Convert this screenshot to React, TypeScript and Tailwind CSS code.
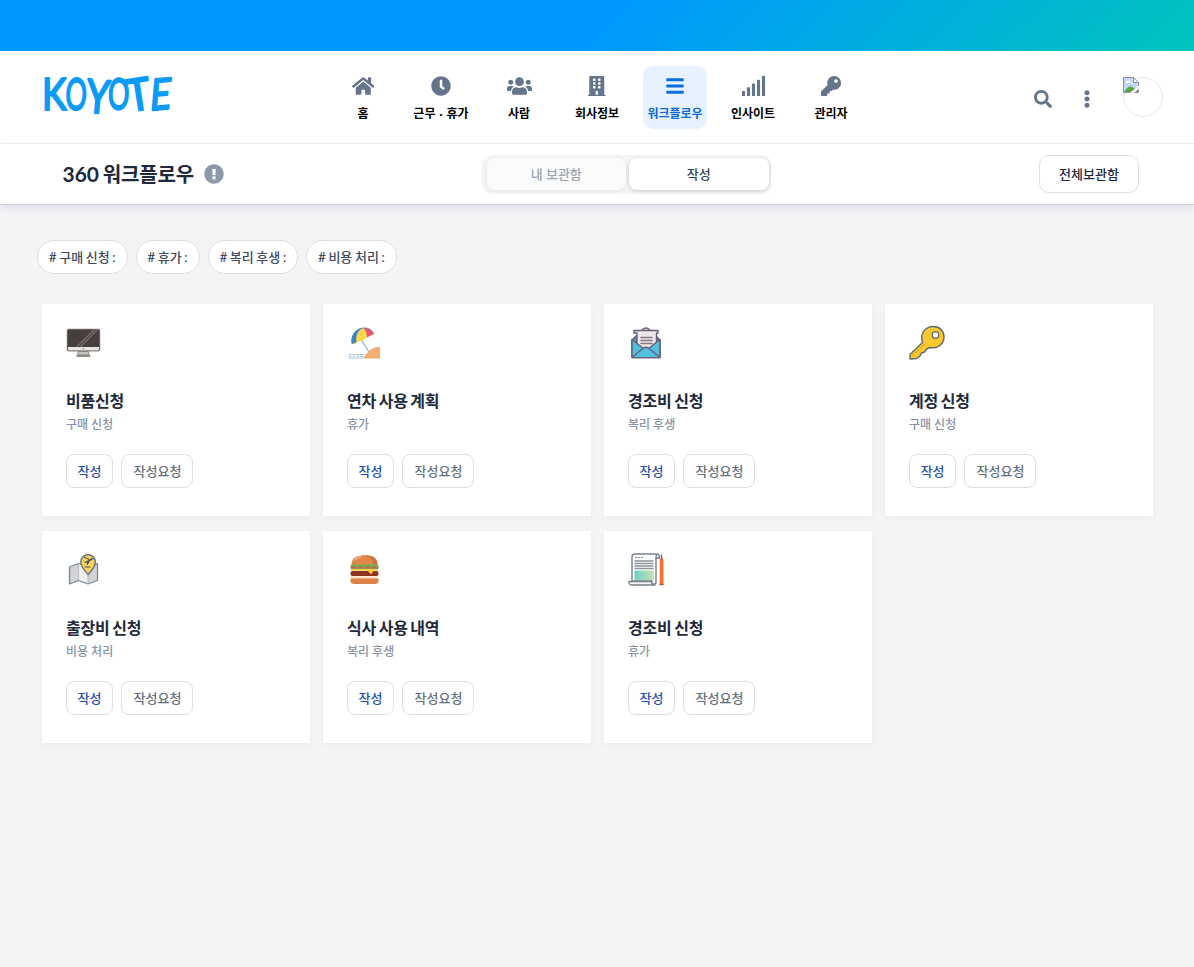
import type { ComponentType, ReactNode } from 'react';
import {
  FaHome, FaClock, FaUsers, FaBuilding, FaBars, FaSignal, FaKey, FaSearch, FaEllipsisV, FaExclamationCircle,
} from 'react-icons/fa';

const nav: { label: string; Icon: ComponentType<{ className?: string }>; size: string; active?: boolean }[] = [
  { label: '홈', Icon: FaHome, size: 'w-[22.5px]' },
  { label: '근무 · 휴가', Icon: FaClock, size: 'w-5' },
  { label: '사람', Icon: FaUsers, size: 'w-[25px]' },
  { label: '회사정보', Icon: FaBuilding, size: 'w-[17.5px]' },
  { label: '워크플로우', Icon: FaBars, size: 'w-5', active: true },
  { label: '인사이트', Icon: FaSignal, size: 'w-[25px]' },
  { label: '관리자', Icon: FaKey, size: 'w-5' },
];

function Art({ children }: { children: ReactNode }) {
  return <svg className="block size-9" viewBox="0 0 36 36" fill="none" strokeLinejoin="round" strokeLinecap="round">{children}</svg>;
}

const Monitor = () => (
  <Art>
    <path d="M13 26h9l1 4H12z" fill="#c9c1bd" stroke="#77706c" strokeWidth=".8" />
    <path d="M11 31h13" stroke="#77706c" strokeWidth="1.3" />
    <rect x="1.3" y="4.3" width="32.4" height="21.6" rx="1.5" fill="#463f3b" stroke="#65605c" />
    <path d="M2 22h31v2.6q0 1-1 1H3q-1 0-1-1z" fill="#e8e5e3" />
    <path d="m11 21.5 17-16.500M14.500 21.500 31 5" stroke="#77716e" strokeWidth="1.2" />
    <circle cx="17.500" cy="23.800" r=".8" fill="#8e8884" />
  </Art>
);

const Beach = () => (
  <Art>
    <path d="M13 13 22 27" stroke="#8fb5ca" strokeWidth="1.300" />
    <path d="M5 19C5 11 9 4 16 3c3 2 4 5 4.500 8.500l-4.500 4-5 1-2.500 2.500z" fill="#fcd64c" />
    <path d="M5 19C2.500 11 9 3 16 3 10 6 8.500 11 9.500 17z" fill="#3482c8" />
    <path d="M16 3c5-1 9 2 11 6l-7 3.500C20 8 18.500 5 16 3z" fill="#e95876" />
    <path d="M5 19c-2-8 4-15.500 11-16s9.500 3 11 6" stroke="#648daf" strokeWidth=".7" />
    <path d="M16 33.500c3-5 7-9.500 12-11 2-.6 3-.5 5-.5v11.500z" fill="#f3ad70" />
    <path d="M2 29.500h15M2 33h14" stroke="#a9cada" strokeWidth="1" />
    <path d="M2 31.300h15" stroke="#a9cada" strokeWidth="1.200" strokeDasharray="1.500 2.500" />
  </Art>
);

const Letter = () => (
  <Art>
    <path d="M4 15 8 11h20l4 4v17.500H4z" fill="#4799b9" stroke="#675f79" strokeWidth="1.400" />
    <path d="M14.500 4.500q3.500-3 7 0" fill="#efb574" stroke="#675f79" strokeWidth="1.500" />
    <path d="M8 5.500h22v2.500h-1.500V23L18 29l-9-7V8H6V5.500z" fill="#eee6e4" stroke="#675f79" strokeWidth="1.400" />
    <path d="M13 12.500h11M13 15.500h11M13 18.500h11" stroke="#817888" strokeWidth="1.500" />
    <path d="M4 14.500v18h28v-18L18 25.500z" fill="#52bfe0" stroke="#675f79" strokeWidth="1.500" />
    <path d="m4.500 32 11-9q2.500-1.500 5 0l11 9" fill="#52bfe0" stroke="#675f79" strokeWidth="1.400" />
  </Art>
);

const KeyArt = () => (
  <Art>
    <path d="M1 34v-4.500l12.500-12C10.500 8 17 1.500 24.500 1.500c6 0 10.500 4.500 10.500 10.500 0 7-6.500 12-14 10.500l-3.500 1.500-2 3-3 1-1.500 3-3.500 2.500z" fill="#fdc931" stroke="#606a6d" strokeWidth="1.400" />
    <path d="m3 31 13-12" stroke="#edb220" strokeWidth="1.500" />
    <circle cx="26.500" cy="10" r="3.300" fill="#fff" stroke="#606a6d" strokeWidth="1.300" />
  </Art>
);

const MapArt = () => (
  <Art>
    <path d="m3.500 15 9-3.500v17l-9 3.500z" fill="#d3d3d5" />
    <path d="m12.500 11.500 9.500 3.500v17l-9.500-3.500z" fill="#ededee" />
    <path d="m22 15 9.500-3.500v17L22 32z" fill="#d3d3d5" />
    <path d="m3.500 15 9-3.500L22 15l9.500-3.500v17L22 32l-9.500-3.500-9 3.500z" stroke="#788795" strokeWidth="1.300" />
    <path d="M12.500 12v16M22 16v15" stroke="#b3bac0" />
    <path d="M22 22.500c-3-3.500-7.200-7.500-7.200-12.500a7.300 7.300 0 0 1 14.600 0c0 5-4 9-7.400 12.500z" fill="#fcd15b" stroke="#667684" strokeWidth="1.400" />
    <path d="m17 8 2 2 7-4q2-.5 2 .5L24 9l-2.500 4-1-.5.5-2-2 .5z" fill="#465765" />
    <path d="m18.500 5.500 5 2M19 15h5" stroke="#465765" />
  </Art>
);

const Burger = () => (
  <Art>
    <path d="M4.500 13C4 5 12 3.300 17.500 3.300S31 5 30.500 13z" fill="#df884b" />
    <path d="M8 8q2-3 6-3" stroke="#f0ad75" strokeWidth="1.600" />
    <path d="M18 3.300c8 0 12.500 3 12.500 9.700h-4q0-6-8.500-9.700z" fill="#cf7439" />
    <path d="M4 17q-2.500-5 3-4.500h21q5-.5 3.500 4.500z" fill="#70ad50" />
    <path d="M5 15.500h25" stroke="#dd5745" strokeWidth="1.800" strokeDasharray="3 4" />
    <rect x="3.500" y="19" width="28" height="5" rx="2" fill="#91321f" />
    <path d="M4 17h27v1.500h-4L24 22.500 20.500 18.500H4z" fill="#ffc93d" />
    <path d="M4 24.500h27V27H4z" fill="#f3dfb8" />
    <path d="M3.500 26.500h28V29q0 3-4 3h-20q-4 0-4-3z" fill="#dc8246" />
  </Art>
);

const Paper = () => (
  <Art>
    <defs>
      <linearGradient id="paperFill" x1="7" y1="23" x2="26" y2="23" gradientUnits="userSpaceOnUse">
        <stop stopColor="#72cfca" /><stop offset="1" stopColor="#c4e3b2" />
      </linearGradient>
    </defs>
    <path d="M28 2H7Q4 2 4 5v24h20v3q2.500 1 4-1V5q.500-3 2-3 1.500 1 1.500 4H28" fill="#fff" stroke="#78818a" strokeWidth="1.400" />
    <path d="M.800 29.500h22.700q0 4 3.500 3.500H4q-3.200 0-3.200-3.500z" fill="#f4f5f6" stroke="#78818a" strokeWidth="1.300" />
    <path d="M7.500 5.500h1M10.500 5.500h1M13.500 5.500h1" stroke="#78818a" strokeWidth="1.200" />
    <path d="M7 9h18M7 11.500h18M7 14h18M7 16.500h18" stroke="#8a929a" strokeWidth="1.400" />
    <path d="M6.500 18.500H26V28H6.500z" fill="url(#paperFill)" />
    <path d="m31.700 8 1.500-3h.8l1.500 3v25h-3.800z" fill="#fa7138" />
    <path d="M33.500 3V8" stroke="#737a80" strokeWidth="1.500" />
    <path d="M32 32.500h3" stroke="#c75432" strokeWidth="1.500" />
  </Art>
);

const cards: { title: string; group: string; Icon: ComponentType }[] = [
  { title: '비품신청', group: '구매 신청', Icon: Monitor },
  { title: '연차 사용 계획', group: '휴가', Icon: Beach },
  { title: '경조비 신청', group: '복리 후생', Icon: Letter },
  { title: '계정 신청', group: '구매 신청', Icon: KeyArt },
  { title: '출장비 신청', group: '비용 처리', Icon: MapArt },
  { title: '식사 사용 내역', group: '복리 후생', Icon: Burger },
  { title: '경조비 신청', group: '휴가', Icon: Paper },
];

const logoLetters = [
  { ch: 'K', t: 'translate(-1 36) scale(.86 1.05)' },
  { ch: 'O', t: 'translate(22 35.500) rotate(2) scale(.62 1.020)' },
  { ch: 'Y', t: 'translate(42 38) rotate(5) scale(.86 1.080)' },
  { ch: 'O', t: 'translate(64.500 35) rotate(2) scale(.62 1)' },
  { ch: 'T', t: 'translate(86 38) rotate(-9) scale(.95 1.040)' },
  { ch: 'E', t: 'translate(106 36.500) rotate(-5) skewX(-10) scale(.85 1)' },
];

function Logo() {
  return (
    <svg className="h-[82px] w-[150px]" viewBox="-10 -20 150 82" aria-label="KOYOTE">
      {logoLetters.map((l, i) => (
        <text key={i} transform={l.t} fontFamily="Lato, sans-serif" fontSize="43" fill="#0a9bf5" stroke="#0a9bf5" strokeWidth="2" strokeLinejoin="round">{l.ch}</text>
      ))}
    </svg>
  );
}

export default function App() {
  return (
    <div className="flex min-h-[967px] flex-col bg-[#f3f4f6] font-['Lato','Noto_Sans_CJK_KR',sans-serif] text-[#1e293b]">
      <div className="h-[51px] bg-[linear-gradient(135deg,#0099ff_50%,#00c4bd_100%)]" />
      <header className="grid h-[93px] grid-cols-[331px_1fr_auto] border-b border-[#f1f2f4] bg-white pr-[31px]">
        <div className="pt-[3px] pl-[33px]"><Logo /></div>
        <nav className="flex gap-[14px] pt-[15px]">
          {nav.map(({ label, Icon, size, active }) => (
            <a key={label} className={`flex h-[63px] w-16 flex-col items-center rounded-[10px] pt-[9.5px] ${active ? 'bg-[#e6f2ff] text-[#0b69d5]' : 'text-black'}`}>
              <Icon className={`h-5 shrink-0 ${size} ${active ? 'text-[#0b6fdd]' : 'text-[#64748b]'}`} />
              <span className="mt-[9.5px] text-xs leading-[18px] font-bold whitespace-nowrap [word-spacing:1px]">{label}</span>
            </a>
          ))}
        </nav>
        <div className="flex h-[92px] items-center text-[#64748b]">
          <FaSearch className="mt-1 size-[18px]" />
          <FaEllipsisV className="mt-1 ml-[26px] size-[18px]" />
          <div className="relative ml-[27px] size-10 rounded-full border border-[#e5e7eb]">
            <svg className="absolute -top-px -left-px size-4" viewBox="0 0 16 16">
              <path d="M.5.500H10.500L15.500 5.500V15.500H.5z" fill="#c3d6f7" stroke="#909295" />
              <path d="M10.500.500v5h5z" fill="#fff" stroke="#909295" />
              <path d="M2.500 6q0-2 2-2 2-1.500 3 1 1.500 0 1.500 1z" fill="#fff" />
              <path d="M1 15q5-8.500 10-4l1 1-4 3z" fill="#55aa42" />
              <path d="M12 15v-1.500L15 11v4z" fill="#55aa42" />
              <path d="m7 16 9-7.500v3L11 16z" fill="#fff" />
            </svg>
          </div>
        </div>
      </header>
      <div className="grid h-[61px] grid-cols-[419px_289px_1fr] items-center border-b border-[#d1d1de] bg-white pr-[55px] pl-[62.5px] shadow-[0_2px_8px_rgba(60,60,90,0.12)]">
        <div className="flex items-center gap-[10px]">
          <h1 className="text-[21px] leading-[30px] font-bold whitespace-nowrap [word-spacing:-1.5px]">360 <span className="text-xl tracking-[-0.15px]">워크플로우</span></h1>
          <FaExclamationCircle className="size-5 text-[#8c99aa]" />
        </div>
        <div className="flex h-[38px] gap-[3px] rounded-[10px] bg-[#f4f5f7] pt-[3px] pr-[2px] pb-[3px] pl-[5px] shadow-[0_1px_2px_rgba(0,0,0,0.04)]">
          <button className="h-8 flex-1 rounded-lg bg-[#fafcfc] pt-px text-[13px] font-medium text-[#9ca3af] shadow-[0_1px_4px_rgba(0,0,0,0.08)]">내 보관함</button>
          <button className="h-8 flex-1 rounded-lg bg-white pt-px text-[13px] font-medium text-[#334155] shadow-[0_1px_4px_rgba(0,0,0,0.18)]">작성</button>
        </div>
        <button className="h-[38px] w-[100px] justify-self-end rounded-[10px] border border-[#dedfe1] bg-white pt-px text-[13px] font-medium">전체보관함</button>
      </div>
      <main className="pt-[35px]">
        <div className="flex gap-2 pl-[37px]">
          {['구매 신청', '휴가', '복리 후생', '비용 처리'].map((c) => (
            <button key={c} className="h-[34px] rounded-full border border-[#dedfe1] bg-white px-[11px] pt-px text-[13px] font-medium whitespace-nowrap text-[#3c4a5c] [word-spacing:-0.65px]"># {c} :</button>
          ))}
        </div>
        <div className="mt-[30px] ml-[42px] grid grid-cols-[repeat(4,268px)] gap-x-[13px] gap-y-[15px]">
          {cards.map(({ title, group, Icon }, i) => (
            <section key={i} className="h-[212px] bg-white px-6 pt-[21px] shadow-[0_2px_6px_rgba(0,0,0,0.04)]">
              <Icon />
              <h2 className="mt-7 text-base leading-6 font-bold tracking-[-0.2px] [word-spacing:-1.1px]">{title}</h2>
              <p className="mt-[3px] text-xs leading-[18px] font-medium text-[#8794a5]">{group}</p>
              <div className="mt-5 flex gap-2">
                <button className="h-[34px] w-[47px] rounded-lg border border-[#dedfe1] pt-px text-[13px] font-medium text-[#1e50af]">작성</button>
                <button className="h-[34px] w-[72px] rounded-lg border border-[#dedfe1] pt-px pl-px text-[13px] font-medium text-[#64707c]">작성요청</button>
              </div>
            </section>
          ))}
        </div>
      </main>
    </div>
  );
}
